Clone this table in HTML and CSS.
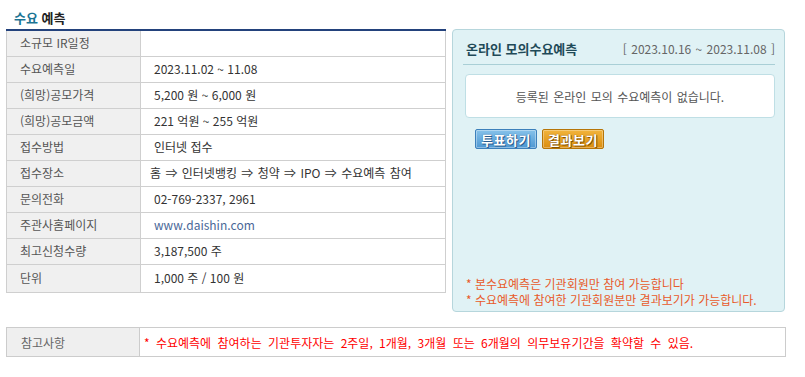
FILE: index.html
```html
<!DOCTYPE html>
<html lang="ko">
<head>
<meta charset="utf-8">
<title>수요 예측</title>
<link rel="stylesheet" href="styles.css">
</head>
<body>
<div class="page">
  <h2 class="sec-title"><span class="hl">수요</span> 예측</h2>
  <div class="top">
    <table class="info">
      <tbody>
        <tr><th>소규모 IR일정</th><td></td></tr>
        <tr><th>수요예측일</th><td>2023.11.02 ~ 11.08</td></tr>
        <tr><th>(희망)공모가격</th><td>5,200 원 ~ 6,000 원</td></tr>
        <tr><th>(희망)공모금액</th><td>221 억원 ~ 255 억원</td></tr>
        <tr><th>접수방법</th><td>인터넷 접수</td></tr>
        <tr><th>접수장소</th><td class="route">홈 ⇒ 인터넷뱅킹 ⇒ 청약 ⇒ IPO ⇒ 수요예측 참여</td></tr>
        <tr><th>문의전화</th><td>02-769-2337, 2961</td></tr>
        <tr><th>주관사홈페이지</th><td><a class="link" href="#">www.daishin.com</a></td></tr>
        <tr><th>최고신청수량</th><td>3,187,500 주</td></tr>
        <tr class="last"><th>단위</th><td>1,000 주 / 100 원</td></tr>
      </tbody>
    </table>
    <div class="panel">
      <div class="panel-head">
        <span class="panel-title">온라인 모의수요예측</span>
        <span class="panel-date">[ 2023.10.16 ~ 2023.11.08 ]</span>
      </div>
      <div class="empty">등록된 온라인 모의 수요예측이 없습니다.</div>
      <div class="btns">
        <span class="btn btn-blue">투표하기</span>
        <span class="btn btn-orange">결과보기</span>
      </div>
      <ul class="notes">
        <li>* 본수요예측은 기관회원만 참여 가능합니다</li>
        <li>* 수요예측에 참여한 기관회원분만 결과보기가 가능합니다.</li>
      </ul>
    </div>
  </div>
  <table class="ref">
    <tbody>
      <tr><th>참고사항</th><td>* 수요예측에 참여하는 기관투자자는 2주일, 1개월, 3개월 또는 6개월의 의무보유기간을 확약할 수 있음.</td></tr>
    </tbody>
  </table>
</div>
</body>
</html>
```

FILE: styles.css
```css
* { box-sizing: border-box; }
html, body { margin: 0; padding: 0; background: #fff; }
body {
  font-family: "Noto Sans CJK KR", "Noto Sans", sans-serif;
  font-size: 12px;
  color: #333;
}
.page { width: 805px; padding: 0 6px; }
.sec-title {
  margin: 0;
  height: 29px;
  padding: 9px 0 0 8px;
  font-size: 13px;
  line-height: 17px;
  font-weight: bold;
  color: #222;
}
.sec-title .hl { color: #1b7494; }
.top { display: flex; align-items: flex-start; gap: 6px; }
.info {
  width: 440px;
  border-collapse: collapse;
  border-top: 2px solid #23427c;
  border-left: 1px solid #cfcfcf;
  border-right: 1px solid #cfcfcf;
}
.info th, .info td {
  height: 26px;
  padding: 0;
  border-bottom: 1px solid #cfcfcf;
  font-weight: normal;
  text-align: left;
  white-space: nowrap;
  line-height: 16px;
}
.info th {
  width: 134px;
  padding-left: 13px;
  background: #f0f0f0;
  color: #555;
  border-right: 1px solid #cfcfcf;
}
.info td { padding-left: 13px; color: #333; }
.info td.route { padding-left: 9px; word-spacing: 1px; }
.info tr.last th, .info tr.last td { height: 28px; }
.link { color: #4a6898; text-decoration: none; }
.panel {
  width: 333px;
  height: 283px;
  background: #e0f2f5;
  border: 1px solid #b6d6dc;
  border-radius: 4px;
  padding: 0 9px 0 10px;
  display: flex;
  flex-direction: column;
}
.panel-head {
  display: flex;
  justify-content: space-between;
  align-items: baseline;
  padding: 9px 0 6px 3px;
  border-bottom: 1px solid #a9cfd6;
}
.panel-title {
  font-size: 13px;
  line-height: 19px;
  font-weight: bold;
  color: #1f4a58;
}
.panel-date { color: #666; font-size: 12px; word-spacing: 1px; }
.empty {
  margin: 9px 0 0 2px;
  height: 44px;
  background: #fff;
  border: 1px solid #bfdfe5;
  border-radius: 4px;
  display: flex;
  align-items: center;
  justify-content: center;
  color: #555;
  word-spacing: 1px;
}
.btns { display: flex; gap: 5px; margin-top: 11px; padding-left: 12px; }
.btn {
  width: 62px;
  height: 20px;
  display: flex;
  align-items: center;
  justify-content: center;
  font-size: 13px;
  font-weight: bold;
  color: #fff;
  border-radius: 2px;
  letter-spacing: 0.5px;
}
.btn-blue {
  background: linear-gradient(#86c2ea, #4f98d2);
  border: 1px solid #3c80bb;
  box-shadow: inset 0 0 0 1px rgba(255,255,255,0.35);
  text-shadow: 0 0 1px #1f4f80, 1px 1px 0 #2a5f90;
}
.btn-orange {
  background: linear-gradient(#f2b43c, #db8e0e);
  border: 1px solid #b67508;
  box-shadow: inset 0 0 0 1px rgba(255,255,255,0.3);
  text-shadow: 0 0 1px #7a4a00, 1px 1px 0 #8a5500;
}
.notes {
  list-style: none;
  margin: auto 0 0 0;
  padding: 0 0 3px 3px;
  color: #e85a2a;
  line-height: 16px;
}
.ref {
  margin-top: 15px;
  width: 780px;
  border-collapse: collapse;
  border: 1px solid #cccccc;
}
.ref th, .ref td {
  height: 29px;
  padding: 0;
  text-align: left;
  font-weight: normal;
  white-space: nowrap;
}
.ref th {
  width: 133px;
  padding-left: 14px;
  background: #efefef;
  color: #666;
  border-right: 1px solid #cccccc;
}
.ref td { padding-left: 4px; color: #f00; word-spacing: 3px; }
```
